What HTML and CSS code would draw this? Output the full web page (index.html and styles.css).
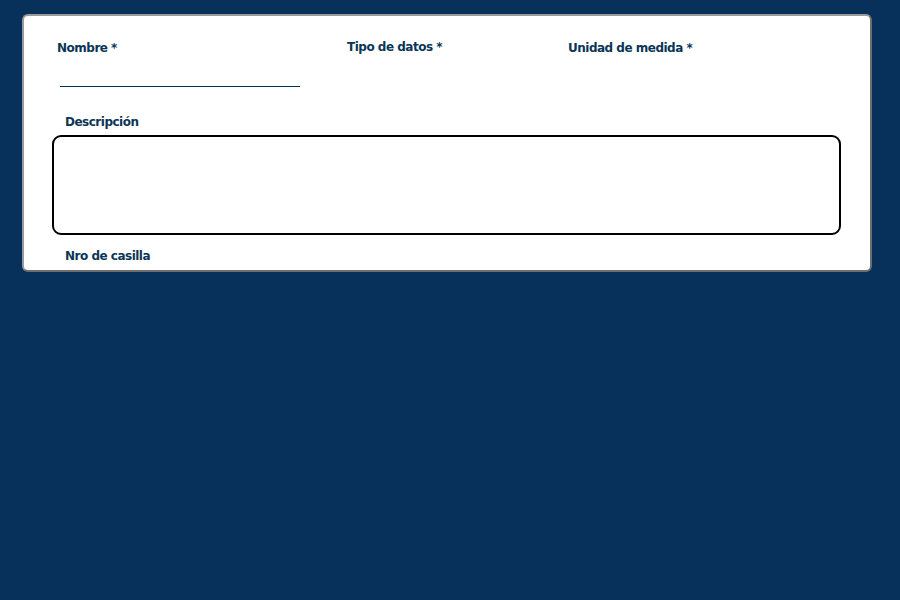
FILE: index.html
```html
<!DOCTYPE html>
<html lang="es">
<head>
<meta charset="utf-8">
<title>Formulario</title>
<link rel="stylesheet" href="styles.css">
</head>
<body>
<div class="panel">
  <div class="row-top">
    <div class="field field-nombre">
      <label class="lbl">Nombre *</label>
      <div class="line-input"></div>
    </div>
    <div class="field field-tipo">
      <label class="lbl">Tipo de datos *</label>
    </div>
    <div class="field field-unidad">
      <label class="lbl">Unidad de medida *</label>
    </div>
  </div>
  <label class="lbl lbl-desc">Descripción</label>
  <div class="textarea"></div>
  <label class="lbl lbl-nro">Nro de casilla</label>
</div>
</body>
</html>
```

FILE: styles.css
```css
html, body {
  margin: 0;
  padding: 0;
}
body {
  background: #07305a;
  width: 900px;
  height: 600px;
  overflow: hidden;
  font-family: "DejaVu Sans", Verdana, sans-serif;
}
.panel {
  box-sizing: border-box;
  margin: 14px 0 0 22px;
  width: 850px;
  height: 258px;
  background: #ffffff;
  border: 2px solid #8c8c8c;
  border-top-color: #9a9a9a;
  border-left-color: #9a9a9a;
  border-right-color: #6e6e6e;
  border-bottom-color: #6e6e6e;
  border-radius: 6px;
  padding: 25px 0 0 0;
  display: flex;
  flex-direction: column;
  align-items: flex-start;
}
.lbl {
  display: block;
  font-size: 12px;
  font-weight: bold;
  line-height: 15px;
  letter-spacing: -0.5px;
  color: #0b3556;
}
.row-top {
  display: grid;
  grid-template-columns: 290px 221px 200px;
  padding-left: 33px;
}
.field-nombre .lbl { margin-top: 0; }
.field-tipo .lbl { margin-top: -1px; }
.field-unidad .lbl { margin-top: 0; }
.line-input {
  margin: 30px 0 0 3px;
  width: 240px;
  height: 1px;
  background: #07305a;
}
.lbl-desc {
  margin: 28px 0 0 41px;
}
.textarea {
  box-sizing: border-box;
  margin: 5px 0 0 28px;
  width: 789px;
  height: 100px;
  border: 2px solid #000000;
  border-radius: 9px;
}
.lbl-nro {
  margin: 14px 0 0 41px;
}
```
